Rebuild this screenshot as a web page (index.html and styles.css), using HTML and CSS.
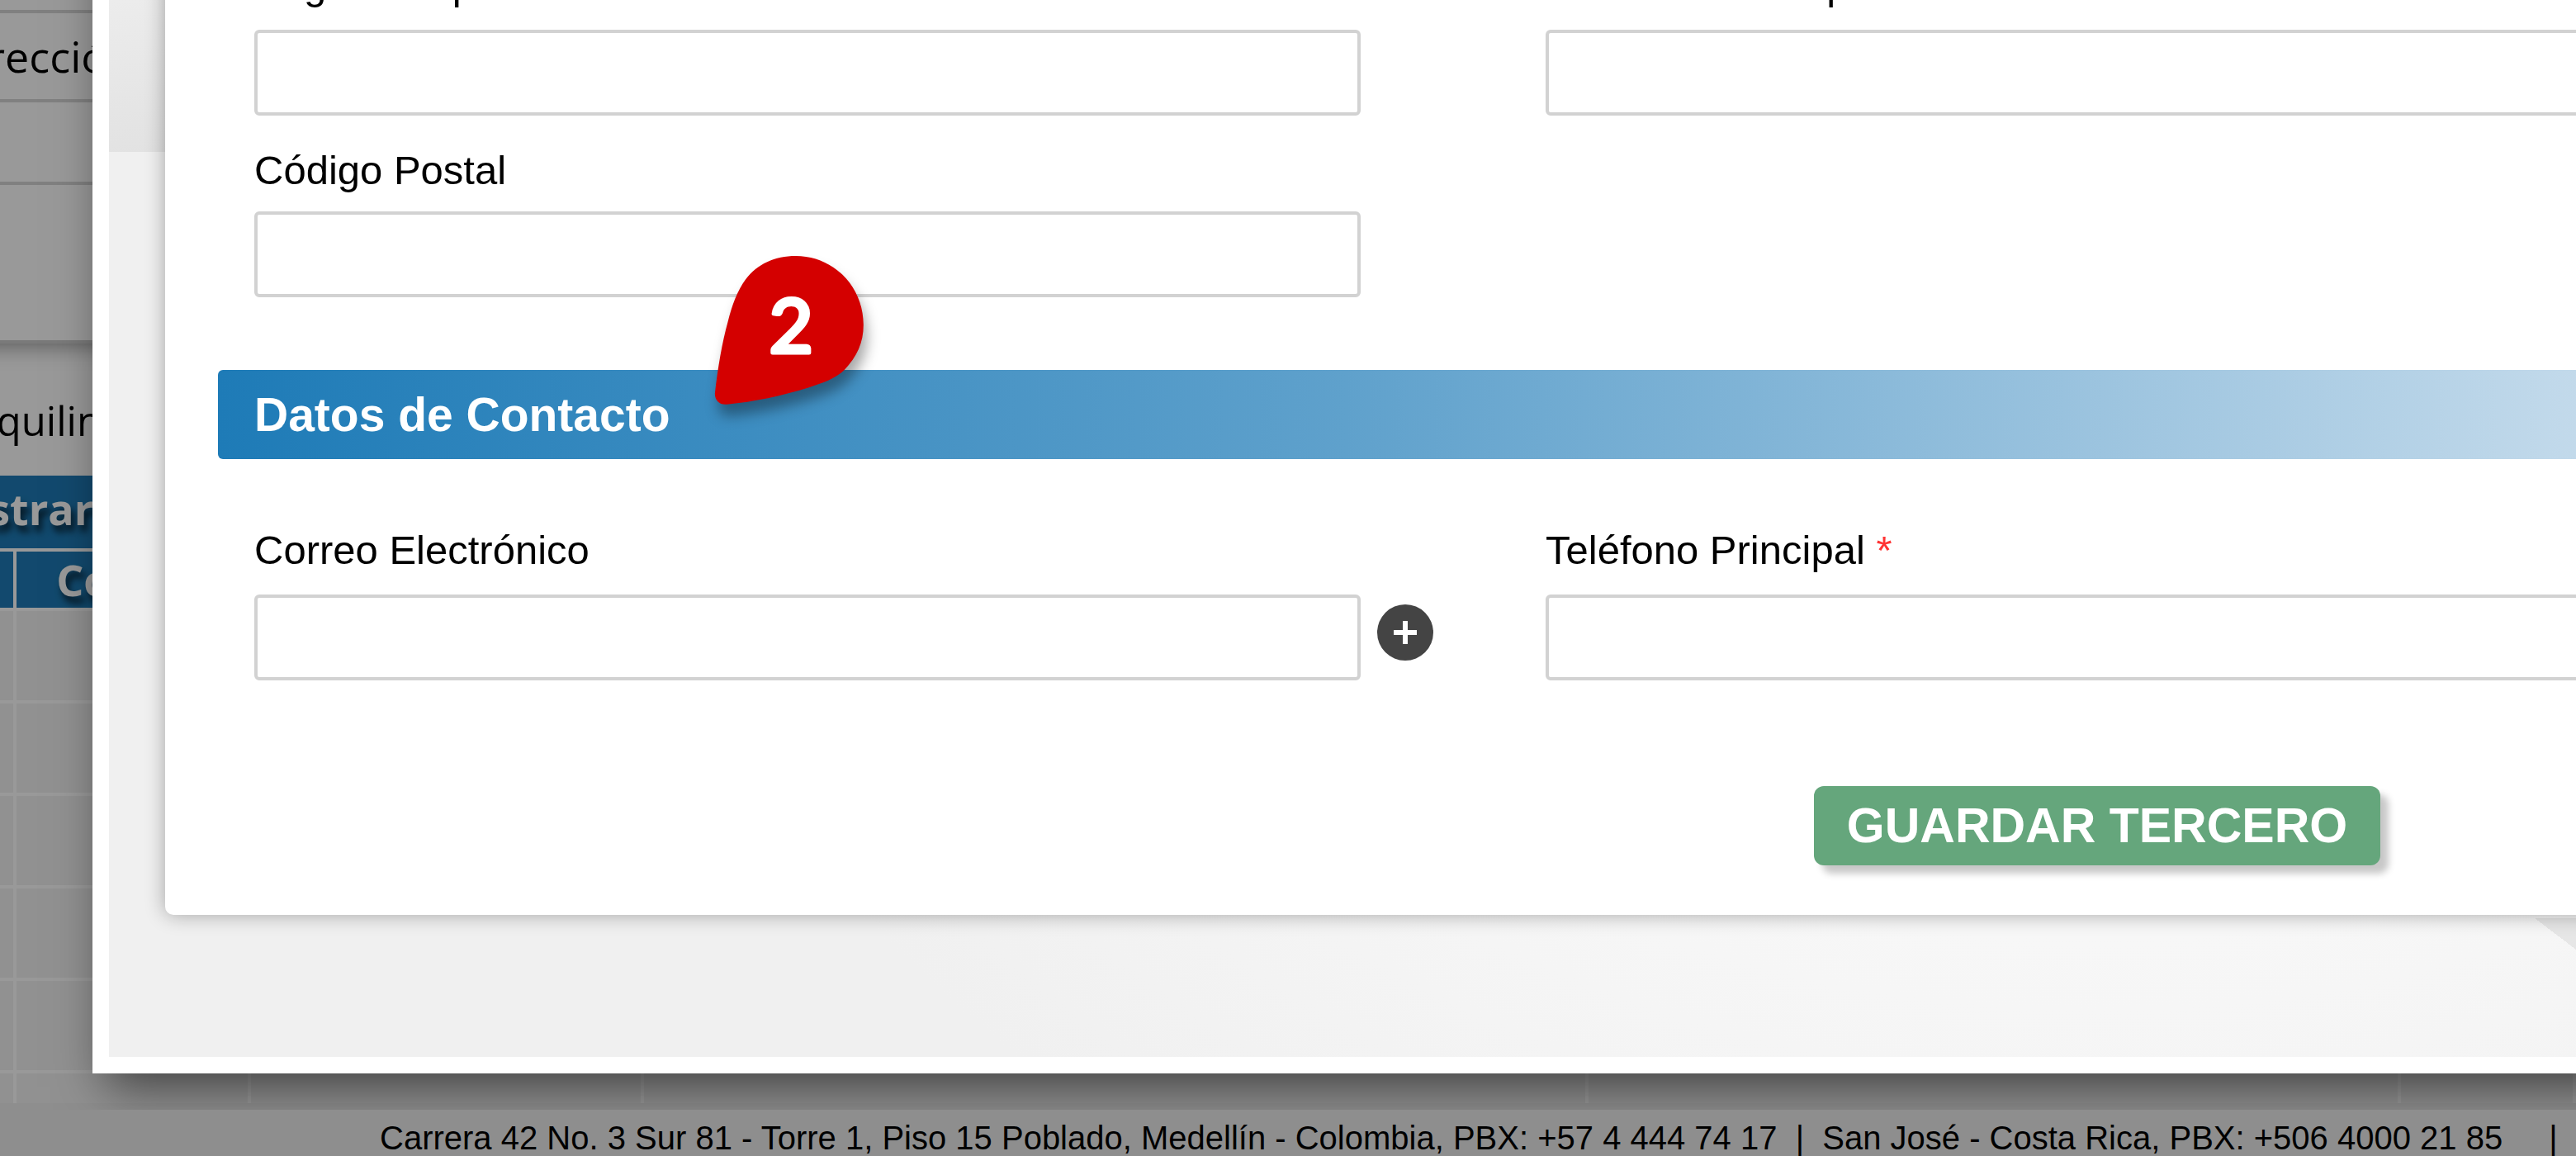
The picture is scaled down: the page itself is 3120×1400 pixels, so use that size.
FILE: index.html
```
<!DOCTYPE html>
<html lang="es">
<head>
    <meta charset="UTF-8">
    <meta name="viewport" content="width=device-width, initial-scale=1.0">
    <title>Terceros</title>
    <link rel="stylesheet" href="styles.css">
</head>
<body>
<main class="page">
    <div class="filters">
        <div class="filter-row first"></div>
        <div class="filter-row">Dirección</div>
        <div class="filter-row empty"></div>
        <div class="filter-row last"></div>
    </div>
    <p class="list-name">Inquilinos</p>
    <div class="list-bar">Mostrar</div>
    <table class="list">
        <colgroup>
            <col class="col-num"><col class="col-code"><col class="col-doc"><col class="col-name"><col class="col-type"><col>
        </colgroup>
        <thead>
            <tr><th></th><th>Código</th><th></th><th></th><th></th><th></th></tr>
        </thead>
        <tbody>
            <tr><td></td><td></td><td></td><td></td><td></td><td></td></tr>
            <tr><td></td><td></td><td></td><td></td><td></td><td></td></tr>
            <tr><td></td><td></td><td></td><td></td><td></td><td></td></tr>
            <tr><td></td><td></td><td></td><td></td><td></td><td></td></tr>
            <tr><td></td><td></td><td></td><td></td><td></td><td></td></tr>
            <tr><td></td><td></td><td></td><td></td><td></td><td></td></tr>
        </tbody>
    </table>
</main>

<div class="overlay">
    <div class="modal">
        <form class="card">
            <div class="fields">
                <div class="field">
                    <label for="apellido">Segundo Apellido</label>
                    <input type="text" id="apellido">
                </div>
                <div class="field">
                    <label for="direccion">Dirección Principal</label>
                    <input type="text" id="direccion">
                </div>
            </div>
            <div class="fields next">
                <div class="field">
                    <label for="postal">Código Postal</label>
                    <input type="text" id="postal">
                </div>
            </div>

            <div class="section">
                <h2 class="section-title">Datos de Contacto</h2>
                <svg class="pin" viewBox="100 60 620 660" aria-label="2">
                    <path fill="#d40000" d="M432 90C568 90 678 200 678 340C678 405 655 455 608 505C575 537 525 553 480 568C380 598 280 621 182 629C156 632 138 615 138 590C148 500 165 400 185 330C200 270 220 215 250 175C292 119 356 90 432 90Z"/>
                    <text class="pin-number" x="415" y="442">2</text>
                </svg>
            </div>

            <div class="fields contact">
                <div class="field">
                    <label for="correo">Correo Electrónico</label>
                    <input type="email" id="correo">
                    <button type="button" class="add" aria-label="Agregar correo">
                        <svg viewBox="0 0 68 68"><path d="M34 20V48M20 34H48" stroke="#fff" stroke-width="6"/></svg>
                    </button>
                </div>
                <div class="field">
                    <label for="telefono">Teléfono Principal <span class="required">*</span></label>
                    <input type="tel" id="telefono">
                </div>
            </div>

            <div class="actions">
                <button type="submit" class="save">GUARDAR TERCERO</button>
            </div>
        </form>
    </div>
</div>

<footer class="footer">
    <span>Carrera 42 No. 3 Sur 81 - Torre 1, Piso 15 Poblado, Medellín - Colombia, PBX: +57 4 444 74 17 &nbsp;|&nbsp; San José - Costa Rica, PBX: +506 4000 21 85</span>
    <span>|</span>
</footer>
</body>
</html>
```
FILE: styles.css
```
* {
    box-sizing: border-box;
}

body {
    margin: 0;
    height: 100vh;
    display: flex;
    flex-direction: column;
    overflow: hidden;
    position: relative;
    background-color: #ededed;
    font-family: "Liberation Sans", Arial, sans-serif;
    color: black;
}

/* Listing behind the dialog */
.page {
    flex: 1;
    min-height: 0;
    overflow: hidden;
    margin-left: -104px;
    background-color: white;
    font-family: "Open Sans", sans-serif;
    font-size: 52px;
}

.filters {
    box-shadow: 0 4px 24px rgba(0, 0, 0, 0.4);
    border-bottom: 4px solid #ccc;
}

.filter-row {
    height: 108px;
    line-height: 104px;
    padding-left: 38px;
    border-bottom: 4px solid #d6d6d6;
}

.filter-row.first {
    height: 16px;
}

.filter-row.empty {
    height: 100px;
}

.filter-row.last {
    height: 188px;
    border-bottom: none;
}

.list-name {
    margin: 0;
    padding: 56px 0 0 56px;
    height: 160px;
    font-size: 49px;
    line-height: 74px;
}

.list-bar {
    height: 88px;
    line-height: 80px;
    padding-left: 9px;
    background-color: #1e7bb7;
    color: white;
    font-weight: bold;
    text-shadow: 4px 8px 8px rgba(0, 0, 0, 0.7);
}

.list {
    width: 100%;
    table-layout: fixed;
    border-collapse: separate;
    border-spacing: 0;
    border-top: 4px solid white;
}

.col-num { width: 124px; }
.col-code { width: 284px; }
.col-doc { width: 476px; }
.col-name { width: 1144px; }
.col-type { width: 984px; }

.list th {
    height: 72px;
    padding: 0 8px 0 0;
    line-height: 64px;
    background-color: #1e7bb7;
    color: white;
    text-shadow: 4px 8px 8px rgba(0, 0, 0, 0.7);
    border-right: 4px solid white;
    border-bottom: 4px solid white;
}

.list td {
    height: 112px;
    padding: 0;
    background-color: #f2f2f2;
    border-right: 4px solid white;
    border-bottom: 4px solid white;
}

/* Dialog */
.overlay {
    position: absolute;
    inset: 0;
    overflow: hidden;
    background-color: rgba(0, 0, 0, 0.4);
}

.modal {
    position: absolute;
    top: -128px;
    left: 112px;
    border: 20px solid white;
    padding: 60px 68px 172px;
    background-color: #eee;
    background-image:
        linear-gradient(172deg, #ededed 30%, #e2e2e2),
        linear-gradient(to top right, transparent 50%, #e6e6e6 50%),
        radial-gradient(circle at 2408px -255px, #f7f7f7 1500px, #f0f0f0 2100px);
    background-size: 68px 292px, 100px 76px, 100% 100%;
    background-position: 0 0, 2938px 1220px, 0 0;
    background-repeat: no-repeat;
    box-shadow: 16px 16px 56px rgba(0, 0, 0, 0.56);
}

.card {
    width: 150vw;
    padding: 0 64px 60px;
    background-color: white;
    border-radius: 10px;
    box-shadow: 0 0 24px rgba(0, 0, 0, 0.32);
}

.fields {
    display: grid;
    grid-template-columns: repeat(3, 1fr);
    gap: 224px;
    padding: 0 40px 0 44px;
}

.fields.next {
    margin-top: 36px;
}

.fields.contact {
    margin-top: 80px;
}

.field {
    position: relative;
}

.field label {
    display: block;
    margin-bottom: 24px;
    font-size: 49px;
    line-height: 60px;
}

.fields.next label {
    margin-bottom: 20px;
}

.field input {
    display: block;
    width: 100%;
    height: 104px;
    padding: 0 20px;
    border: 4px solid #d2d2d2;
    border-radius: 6px;
    background-color: white;
    font-family: inherit;
    font-size: 49px;
}

.required {
    color: #ff3333;
}

.add {
    position: absolute;
    left: calc(100% + 20px);
    bottom: 24px;
    width: 68px;
    height: 68px;
    padding: 0;
    border: none;
    border-radius: 50%;
    background-color: #444;
    cursor: pointer;
}

.add svg {
    display: block;
    fill: none;
}

.section {
    position: relative;
    margin-top: 88px;
}

.section-title {
    margin: 0;
    padding: 0 44px;
    font-size: 57px;
    line-height: 108px;
    border-radius: 6px;
    color: white;
    background-image: linear-gradient(to right, #1e7bb7, #5fa1cc 30%, #c3daeb 63%, white 85%);
}

/* Step marker */
.pin {
    position: absolute;
    left: 589px;
    bottom: 36px;
    width: 207px;
    height: 220px;
    filter: drop-shadow(4px 14px 8px rgba(0, 0, 0, 0.35));
}

.pin-number {
    font-family: Lato, sans-serif;
    font-size: 276px;
    text-anchor: middle;
    fill: white;
    stroke: white;
    stroke-width: 15px;
    stroke-linejoin: round;
}

.actions {
    margin-top: 128px;
}

.save {
    display: block;
    margin: 0 auto;
    height: 96px;
    padding: 0 40px;
    border: none;
    border-radius: 12px;
    background-color: #65a67c;
    color: white;
    font-family: inherit;
    font-size: 59px;
    font-weight: bold;
    line-height: 94px;
    box-shadow: 10px 10px 8px rgba(0, 0, 0, 0.22);
    cursor: pointer;
}

.footer {
    position: relative;
    display: flex;
    gap: 56px;
    height: 56px;
    margin-top: 8px;
    padding-left: 460px;
    background-color: #8e8e8e;
    font-size: 40px;
    line-height: 68px;
    white-space: nowrap;
}
```
